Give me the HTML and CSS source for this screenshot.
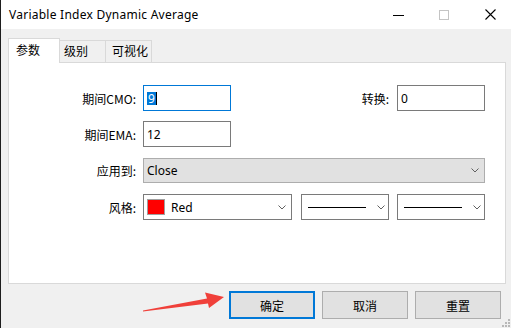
FILE: index.html
```html
<!DOCTYPE html>
<html>
<head>
<meta charset="utf-8">
<link rel="stylesheet" href="styles.css">
</head>
<body>
<div class="window">
  <div class="titlebar">
    <span class="title">Variable Index Dynamic Average</span>
    <svg class="ctl ctl-min" width="11" height="10" viewBox="0 0 11 10"><path d="M0 5.5H11" stroke="#000" stroke-width="1"/></svg>
    <svg class="ctl ctl-max" width="10" height="10" viewBox="0 0 10 10"><rect x="0.5" y="0.5" width="9" height="9" fill="none" stroke="#c4c4c4"/></svg>
    <svg class="ctl ctl-close" width="11" height="11" viewBox="0 0 11 11"><path d="M0.5 0.5L10.5 10.5M10.5 0.5L0.5 10.5" stroke="#000" stroke-width="1.1"/></svg>
  </div>
  <div class="content">
    <div class="tabs">
      <div class="tab active">参数</div>
      <div class="tab">级别</div>
      <div class="tab">可视化</div>
    </div>
    <div class="panel">
      <div class="form">
        <div class="row r1">
          <label class="label">期间CMO:</label>
          <div class="input focus"><span class="sel">9</span></div>
          <label class="label2">转换:</label>
          <div class="input">0</div>
        </div>
        <div class="row r2">
          <label class="label">期间EMA:</label>
          <div class="input">12</div>
        </div>
        <div class="row r3">
          <label class="label">应用到:</label>
          <div class="select grey"><span class="val">Close</span>
            <svg class="chev" width="8" height="5" viewBox="0 0 8 5"><path d="M0.5 0.5L4 4L7.5 0.5" fill="none" stroke="#606060"/></svg>
          </div>
        </div>
        <div class="row r4">
          <label class="label">风格:</label>
          <div class="select color"><span class="swatch"></span><span class="val">Red</span>
            <svg class="chev" width="8" height="5" viewBox="0 0 8 5"><path d="M0.5 0.5L4 4L7.5 0.5" fill="none" stroke="#606060"/></svg>
          </div>
          <div class="select line"><span class="stroke"></span>
            <svg class="chev" width="8" height="5" viewBox="0 0 8 5"><path d="M0.5 0.5L4 4L7.5 0.5" fill="none" stroke="#606060"/></svg>
          </div>
          <div class="select line last"><span class="stroke"></span>
            <svg class="chev" width="8" height="5" viewBox="0 0 8 5"><path d="M0.5 0.5L4 4L7.5 0.5" fill="none" stroke="#606060"/></svg>
          </div>
        </div>
      </div>
    </div>
    <div class="buttons">
      <div class="btn default">确定</div>
      <div class="btn">取消</div>
      <div class="btn">重置</div>
    </div>
  </div>
  <svg class="arrow" width="90" height="26" viewBox="0 0 90 26"><polygon points="3,22.5 67,10.5 65,4.5 84,9 69,20 68,15.5 3,23.5" fill="#f0403a"/></svg>
  <svg class="grip" width="10" height="10" viewBox="0 0 10 10">
    <rect x="7" y="1" width="2" height="2" fill="#b8b8b8"/>
    <rect x="4" y="4" width="2" height="2" fill="#b8b8b8"/>
    <rect x="7" y="4" width="2" height="2" fill="#b8b8b8"/>
    <rect x="1" y="7" width="2" height="2" fill="#b8b8b8"/>
    <rect x="4" y="7" width="2" height="2" fill="#b8b8b8"/>
    <rect x="7" y="7" width="2" height="2" fill="#b8b8b8"/>
  </svg>
</div>
</body>
</html>
```
FILE: styles.css
```css
html, body {
  margin: 0;
  padding: 0;
  background: #f0f0f0;
}
.window {
  position: relative;
  width: 511px;
  height: 328px;
  box-sizing: border-box;
  border-left: 1px solid #1e1e1e;
  background: #f0f0f0;
  display: flex;
  flex-direction: column;
  font-family: "Noto Sans CJK SC", sans-serif;
  font-size: 12px;
  color: #000;
  overflow: hidden;
}
.titlebar {
  height: 29px;
  flex: none;
  background: #fff;
  display: flex;
  align-items: center;
  padding-left: 8px;
}
.title {
  font-family: "Noto Sans", sans-serif;
  font-size: 12px;
  flex: 1;
  color: #000;
  letter-spacing: 0.25px;
}
.ctl { flex: none; display: block; }
.ctl-min { margin-right: 35px; }
.ctl-max { margin-right: 36px; }
.ctl-close { margin-right: 15px; }

.content {
  flex: 1;
  padding: 9px 5px 0 7px;
  display: flex;
  flex-direction: column;
}
.tabs {
  height: 24px;
  display: flex;
  align-items: flex-end;
  position: relative;
  z-index: 2;
}
.tab {
  box-sizing: border-box;
  height: 22px;
  width: 46px;
  border: 1px solid #d9d9d9;
  border-bottom: none;
  border-left: none;
  background: #f0f0f0;
  padding-left: 4px;
  line-height: 20px;
}
.tab.active {
  width: 52px;
  height: 25px;
  margin-bottom: -1px;
  border-left: 1px solid #d9d9d9;
  background: #fff;
  padding-left: 7px;
  line-height: 22px;
}
.tab:last-child { padding-left: 6px; }
.panel {
  height: 222px;
  box-sizing: border-box;
  border: 1px solid #d9d9d9;
  background: #fff;
}
.form {
  width: 476px;
  padding-top: 22px;
  display: flex;
  flex-direction: column;
}
.row {
  display: flex;
  align-items: center;
}
.r1 { height: 26px; }
.r2 { height: 26px; margin-top: 10px; }
.r3 { height: 25px; margin-top: 11px; }
.r4 { height: 26px; margin-top: 11px; }
.label {
  width: 127px;
  text-align: right;
  margin-right: 7px;
  flex: none;
}
.label2 {
  margin-left: auto;
  margin-right: 8px;
}
.input {
  box-sizing: border-box;
  width: 88px;
  height: 26px;
  border: 1px solid #7a7a7a;
  background: #fff;
  font-family: "Noto Sans", sans-serif;
  font-size: 12px;
  padding-left: 3px;
  display: flex;
  align-items: center;
  flex: none;
}
.input.focus { border-color: #0078d7; }
.sel {
  background: #0078d7;
  color: #fff;
  padding: 0 1px;
  line-height: 13px;
  border-right: 1px solid #000;
}
.select {
  box-sizing: border-box;
  height: 100%;
  border: 1px solid #7a7a7a;
  background: #fff;
  display: flex;
  align-items: center;
  font-family: "Noto Sans", sans-serif;
  font-size: 12px;
  position: relative;
  flex: none;
}
.select.grey {
  flex: 1;
  background: #e1e1e1;
  border-color: #adadad;
  padding-left: 3px;
}
.chev {
  margin-left: auto;
  margin-right: 5px;
  display: block;
}
.select.color {
  width: 149px;
  padding-left: 3px;
}
.swatch {
  box-sizing: border-box;
  width: 18px;
  height: 16px;
  background: #ff0000;
  border: 1px solid #a0a0a0;
  margin-right: 6px;
}
.select.line {
  width: 88px;
  margin-left: 9px;
  padding-left: 6px;
}
.select.line.last { margin-left: 8px; }
.stroke {
  width: 58px;
  height: 1px;
  background: #000;
}
.select.line .chev { margin-right: 3px; }

.buttons {
  margin-top: 7px;
  padding-right: 5px;
  display: flex;
  justify-content: flex-end;
  gap: 7px;
}
.btn {
  box-sizing: border-box;
  width: 86px;
  height: 28px;
  border: 1px solid #adadad;
  background: #e1e1e1;
  display: flex;
  align-items: center;
  justify-content: center;
}
.btn.default {
  border: 2px solid #0078d7;
}
.arrow {
  position: absolute;
  left: 139px;
  top: 288px;
  pointer-events: none;
}
.grip {
  position: absolute;
  right: 0;
  bottom: 0;
}
```
